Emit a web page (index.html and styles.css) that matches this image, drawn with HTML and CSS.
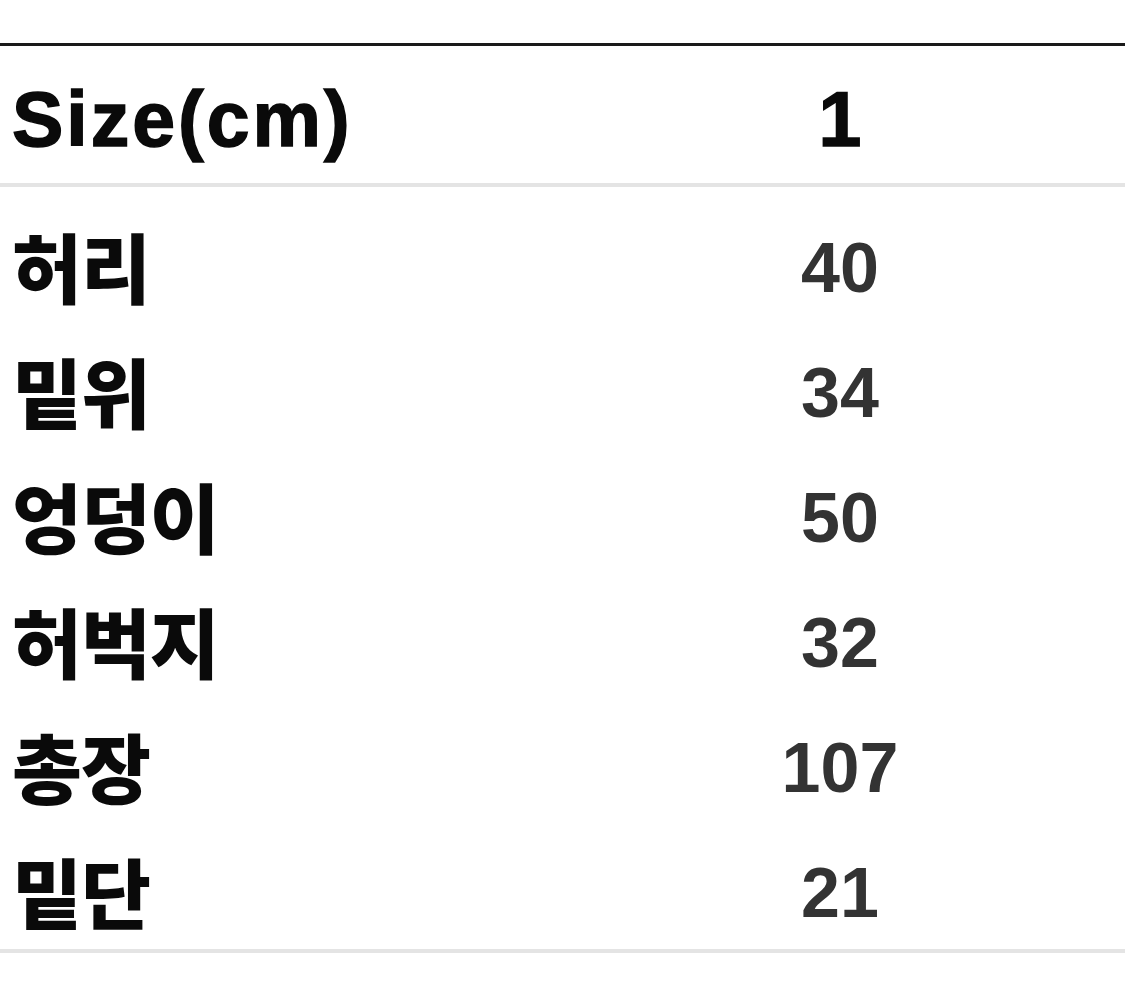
FILE: index.html
```html
<!DOCTYPE html>
<html lang="ko">
<head>
<meta charset="utf-8">
<title>Size</title>
<link rel="stylesheet" href="styles.css">
</head>
<body>
<div class="size-table">
  <div class="head-row">
    <div class="label latin">Size(cm)</div>
    <div class="value head-value">1</div>
  </div>
  <div class="body">
    <div class="row"><div class="label">허리</div><div class="value">40</div></div>
    <div class="row"><div class="label">밑위</div><div class="value">34</div></div>
    <div class="row"><div class="label">엉덩이</div><div class="value">50</div></div>
    <div class="row"><div class="label">허벅지</div><div class="value">32</div></div>
    <div class="row"><div class="label">총장</div><div class="value">107</div></div>
    <div class="row"><div class="label">밑단</div><div class="value">21</div></div>
  </div>
</div>
</body>
</html>
```

FILE: styles.css
```css
html, body {
  margin: 0;
  padding: 0;
  background: #ffffff;
}

.size-table {
  margin-top: 43px;
  width: 1125px;
  border-top: 3px solid #1a1a1a;
  font-family: "Liberation Sans", "Noto Sans CJK KR", sans-serif;
}

.head-row {
  display: grid;
  grid-template-columns: 555px 1fr;
  align-items: center;
  height: 141px;
  padding-top: 9px;
  box-sizing: border-box;
  border-bottom: 4px solid #e4e4e4;
}

.body {
  padding: 6px 0;
  border-bottom: 4px solid #e4e4e4;
}

.row {
  display: grid;
  grid-template-columns: 555px 1fr;
  align-items: center;
  height: 125px;
  padding-top: 25px;
  box-sizing: border-box;
}

.label {
  padding-left: 12px;
  margin-top: -6px;
  font-family: "Noto Sans CJK KR", "Liberation Sans", sans-serif;
  font-weight: 900;
  font-size: 76px;
  line-height: 1;
  color: #0a0a0a;
  letter-spacing: -1px;
}

.label.latin {
  margin-top: 0;
  font-family: "Liberation Sans", Arial, sans-serif;
  font-weight: 700;
  font-size: 77px;
  letter-spacing: 3px;
  -webkit-text-stroke: 1.5px #0a0a0a;
}

.value {
  text-align: center;
  font-family: "Liberation Sans", Arial, sans-serif;
  font-weight: 700;
  font-size: 70px;
  line-height: 1;
  color: #333333;
}

.head-value {
  font-size: 77px;
  color: #0a0a0a;
  -webkit-text-stroke: 1.5px #0a0a0a;
}
```
